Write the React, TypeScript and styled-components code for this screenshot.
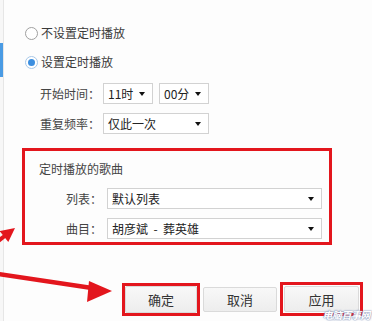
import React from 'react';
import styled, { createGlobalStyle } from 'styled-components';

const GlobalStyle = createGlobalStyle`
  html, body {
    margin: 0;
    padding: 0;
    background: #ffffff;
  }
  body {
    font-family: "Noto Sans CJK SC", "Noto Sans", sans-serif;
    color: #333333;
  }
`;

const Page = styled.div`
  position: relative;
  display: flex;
  width: 372px;
  height: 321px;
  overflow: hidden;
  background: #fdfdfd;
`;

const Sidebar = styled.div`
  width: 3px;
  flex: none;
  border-right: 1px solid #e6e6e6;
  background: #f7f7f7;
`;

const SideMark = styled.div`
  margin-top: 43px;
  width: 3px;
  height: 34px;
  background: #4a9be4;
`;

const Content = styled.div`
  flex: 1;
  display: flex;
  flex-direction: column;
  padding: 26px 0 0 21px;
`;

const RadioRow = styled.label<{ $mb: number }>`
  display: flex;
  align-items: center;
  gap: 3px;
  height: 14px;
  font-size: 12px;
  line-height: 14px;
  color: #3a3a3a;
  margin-bottom: ${(p) => p.$mb}px;
`;

const RadioDot = styled.span<{ $on?: boolean }>`
  box-sizing: border-box;
  width: 13px;
  height: 13px;
  border-radius: 50%;
  border: 1px solid ${(p) => (p.$on ? '#a9c8e8' : '#a0a0a0')};
  background: #ffffff;
  display: flex;
  align-items: center;
  justify-content: center;
  &::after {
    content: '';
    width: 7px;
    height: 7px;
    border-radius: 50%;
    background: ${(p) => (p.$on ? '#3d8fe0' : 'transparent')};
  }
`;

const Fields = styled.div`
  padding-left: 15px;
`;

const FieldRow = styled.div<{ $mb: number }>`
  display: flex;
  align-items: center;
  height: 21px;
  margin-bottom: ${(p) => p.$mb}px;
`;

const FieldLabel = styled.span<{ $w: number; $right?: boolean }>`
  width: ${(p) => p.$w}px;
  flex: none;
  font-size: 12px;
  color: #444444;
  text-align: ${(p) => (p.$right ? 'right' : 'left')};
  padding-right: ${(p) => (p.$right ? 5 : 0)}px;
`;

const SelectBox = styled.div<{ $w: number }>`
  box-sizing: border-box;
  width: ${(p) => p.$w}px;
  height: 21px;
  border: 1px solid #d2d2d2;
  background: #ffffff;
  display: flex;
  align-items: center;
  justify-content: space-between;
  padding: 0 7px 0 4px;
  font-size: 12px;
  color: #222222;
  margin-right: 6px;
  white-space: pre;
`;

const Caret = styled.span`
  width: 0;
  height: 0;
  border-left: 3.5px solid transparent;
  border-right: 3.5px solid transparent;
  border-top: 4px solid #111111;
`;

const Highlight = styled.div`
  box-sizing: border-box;
  margin: 14px 0 0 -3px;
  width: 310px;
  height: 97px;
  border: 3px solid #e3161d;
  padding: 10px 0 0 14px;
  display: flex;
  flex-direction: column;
`;

const GroupTitle = styled.div`
  font-size: 12px;
  line-height: 16px;
  color: #444444;
  margin-bottom: 11px;
`;

const BoxRows = styled.div`
  margin-left: 23px;
  display: flex;
  flex-direction: column;
`;

const ButtonBar = styled.div`
  display: flex;
  align-items: center;
  gap: 3px;
  margin: 37px 0 0 97px;
`;

const Frame = styled.div<{ $w: number; $h: number }>`
  box-sizing: border-box;
  width: ${(p) => p.$w}px;
  height: ${(p) => p.$h}px;
  border: 3px solid #e3161d;
  display: flex;
  align-items: center;
  justify-content: center;
`;

const Button = styled.button<{ $w: number; $h: number }>`
  box-sizing: border-box;
  width: ${(p) => p.$w}px;
  height: ${(p) => p.$h}px;
  border: 1px solid #dadada;
  border-radius: 2px;
  background: linear-gradient(#f8f8f8, #ededed);
  font-family: inherit;
  font-size: 13px;
  color: #333333;
  padding: 0;
`;

const Overlay = styled.svg`
  position: absolute;
  left: 0;
  top: 0;
  pointer-events: none;
`;

const Watermark = styled.div`
  position: absolute;
  right: 2px;
  bottom: 0;
  font-size: 10px;
  line-height: 12px;
  font-style: italic;
  font-weight: bold;
  color: #ffffff;
  text-shadow: 0 0 2px #7d8fb8, 0 0 1px #5c6f9c;
  letter-spacing: -0.5px;
`;

function Select({ w, text }: { w: number; text: string }) {
  return (
    <SelectBox $w={w}>
      <span>{text}</span>
      <Caret />
    </SelectBox>
  );
}

export default function App() {
  return (
    <>
      <GlobalStyle />
      <Page>
        <Sidebar>
          <SideMark />
        </Sidebar>
        <Content>
          <RadioRow $mb={15}>
            <RadioDot />
            不设置定时播放
          </RadioRow>
          <RadioRow $mb={14}>
            <RadioDot $on />
            设置定时播放
          </RadioRow>
          <Fields>
            <FieldRow $mb={9}>
              <FieldLabel $w={63}>开始时间：</FieldLabel>
              <Select w={50} text="11时" />
              <Select w={50} text="00分" />
            </FieldRow>
            <FieldRow $mb={0}>
              <FieldLabel $w={63}>重复频率：</FieldLabel>
              <Select w={106} text="仅此一次" />
            </FieldRow>
          </Fields>
          <Highlight>
            <GroupTitle>定时播放的歌曲</GroupTitle>
            <BoxRows>
              <FieldRow $mb={9}>
                <FieldLabel $w={40} $right>列表：</FieldLabel>
                <Select w={215} text="默认列表" />
              </FieldRow>
              <FieldRow $mb={0}>
                <FieldLabel $w={40} $right>曲目：</FieldLabel>
                <Select w={215} text="胡彦斌  -  葬英雄" />
              </FieldRow>
            </BoxRows>
          </Highlight>
          <ButtonBar>
            <Frame $w={78} $h={33}>
              <Button $w={72} $h={27}>确定</Button>
            </Frame>
            <Button $w={74} $h={25}>取消</Button>
            <Frame $w={83} $h={34}>
              <Button $w={75} $h={26}>应用</Button>
            </Frame>
          </ButtonBar>
        </Content>
        <Overlay width={372} height={321} viewBox="0 0 372 321">
          <line x1={-20} y1={255} x2={6} y2={235} stroke="#e3161d" strokeWidth={4} />
          <polygon points="15,228 -0.3,231 8.3,242" fill="#e3161d" />
          <line x1={-2} y1={274} x2={92} y2={288} stroke="#e3161d" strokeWidth={4.5} />
          <polygon points="112,291 89,281 87,302" fill="#e3161d" />
        </Overlay>
        <Watermark>电脑百事网</Watermark>
      </Page>
    </>
  );
}
